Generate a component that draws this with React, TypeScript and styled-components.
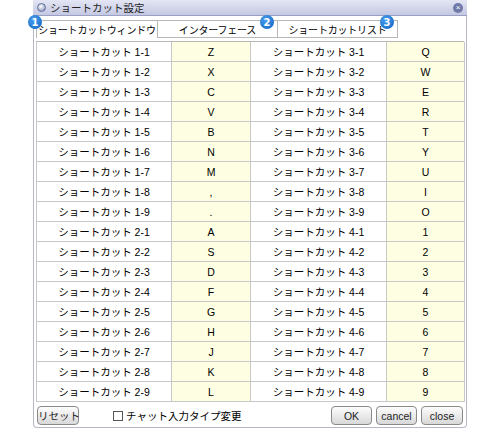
import React from "react";
import styled, { createGlobalStyle } from "styled-components";

const G = createGlobalStyle`
  body { margin: 0; background: #fff; font-family: "Liberation Sans", "Noto Sans CJK JP", sans-serif; font-size: 11px; color: #000; }
`;
const Win = styled.div`
  position: relative; margin-left: 33px; width: 434px; height: 428px;
  border: 1px solid #b4b8c4; border-top: none; border-radius: 0 0 4px 4px; box-sizing: border-box;
  display: flex; flex-direction: column;
`;
const Title = styled.div`
  height: 15px; display: flex; align-items: center; gap: 4px; padding: 0 4px;
  background: linear-gradient(#e4e6f4, #c4c8e2); border-bottom: 1px solid #9aa0c4;
  font-size: 10.5px; color: #222; margin: 0 -1px; white-space: nowrap;
`;
const Dot = styled.span`
  width: 9px; height: 9px; border-radius: 50%; background: radial-gradient(circle at 40% 35%, #fff, #7a86b0);
  border: 1px solid #6070a0; box-sizing: border-box;
`;
const Close = styled.span`
  margin-left: auto; width: 10px; height: 10px; border-radius: 50%; background: #6f7aa8; color: #fff;
  font-size: 8px; line-height: 10px; text-align: center;
`;
const Tabs = styled.div`
  display: flex; padding: 4px 0 0 2px; height: 18px;
`;
const Tab = styled.div<{ $w: number; $active?: boolean }>`
  position: relative; width: ${p => p.$w}px; height: 18px; box-sizing: border-box; white-space: nowrap;
  border: 1px solid #b8b8b8; border-bottom: ${p => (p.$active ? "none" : "1px solid #b8b8b8")};
  margin-right: -1px; display: flex; align-items: center; justify-content: center; font-size: 10px; letter-spacing: -0.2px; background: #fff;
`;
const Badge = styled.span<{ $l: number }>`
  position: absolute; top: -6px; left: ${p => p.$l}px; width: 14px; height: 14px; border-radius: 50%;
  background: radial-gradient(circle at 40% 35%, #4aa0ee, #0d5fc0); color: #fff; font-size: 10px; font-weight: bold;
  display: flex; align-items: center; justify-content: center; font-family: "DejaVu Sans", sans-serif; letter-spacing: 0;
`;
const Table = styled.div`
  margin: 3px 2px 0 2px; display: grid; grid-template-columns: 135px 79px 136px 78px;
  border-top: 1px solid #b8b8b8; border-left: 1px solid #c8c8c8;
`;
const Cell = styled.div<{ $key?: boolean }>`
  height: 20px; box-sizing: border-box; border-right: 1px solid #c8c8c8; border-bottom: 1px solid #c8c8c8; white-space: nowrap;
  background: ${p => (p.$key ? "#fefee2" : "#fff")}; display: flex; align-items: center; justify-content: center; font-size: 10.5px;
`;
const Bottom = styled.div`
  display: flex; align-items: center; padding: 4px 3px 0 3px; gap: 4px;
`;
const Btn = styled.button<{ $w: number }>`
  width: ${p => p.$w}px; height: 19px; border: 1px solid #8a8a8a; border-radius: 4px; white-space: nowrap;
  background: linear-gradient(#fdfdfd, #d8d8d8); font-family: inherit; font-size: 10.5px; padding: 0; color: #222;
`;
const Check = styled.label`
  margin-left: 30px; display: flex; align-items: center; gap: 3px; font-size: 10.5px; flex: 1; white-space: nowrap;
`;
const Box = styled.span`width: 8px; height: 8px; border: 1px solid #555;`;

const left1 = ["Z", "X", "C", "V", "B", "N", "M", ",", ".", "A", "S", "D", "F", "G", "H", "J", "K", "L"];
const right1 = ["Q", "W", "E", "R", "T", "Y", "U", "I", "O", "1", "2", "3", "4", "5", "6", "7", "8", "9"];

export default function App() {
  return (
    <>
      <G />
      <Win>
        <Title><Dot />ショートカット設定<Close>×</Close></Title>
        <Tabs>
          <Tab $w={122} $active><Badge $l={-9}>1</Badge>ショートカットウィンドウ</Tab>
          <Tab $w={121}>インターフェース<Badge $l={102}>2</Badge></Tab>
          <Tab $w={121}>ショートカットリスト<Badge $l={102}>3</Badge></Tab>
        </Tabs>
        <Table>
          {left1.map((k, i) => {
            const a = i < 9 ? `1-${i + 1}` : `2-${i - 8}`;
            const b = i < 9 ? `3-${i + 1}` : `4-${i - 8}`;
            return (
              <React.Fragment key={i}>
                <Cell>ショートカット {a}</Cell>
                <Cell $key>{k}</Cell>
                <Cell>ショートカット {b}</Cell>
                <Cell $key>{right1[i]}</Cell>
              </React.Fragment>
            );
          })}
        </Table>
        <Bottom>
          <Btn $w={42}>リセット</Btn>
          <Check><Box />チャット入力タイプ変更</Check>
          <Btn $w={41}>OK</Btn>
          <Btn $w={41}>cancel</Btn>
          <Btn $w={42}>close</Btn>
        </Bottom>
      </Win>
    </>
  );
}
